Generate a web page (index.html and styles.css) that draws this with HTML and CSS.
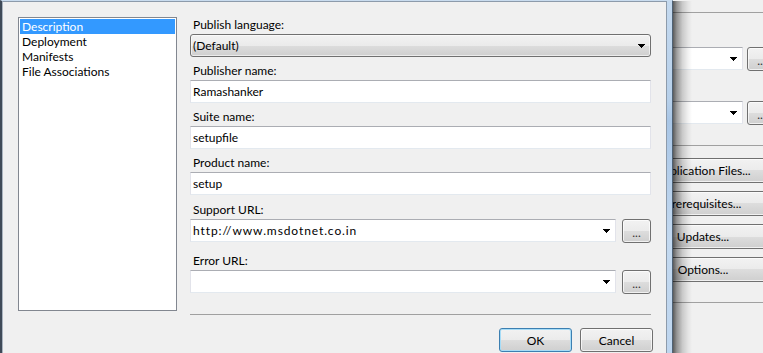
FILE: index.html
```html
<!DOCTYPE html>
<html lang="en">
<head>
  <meta charset="UTF-8" />
  <title>Publish Options</title>
  <meta name="viewport" content="width=device-width, initial-scale=1.0">
  <link rel="stylesheet" href="styles.css">
</head>
<body>

  <!-- Publish page of the project, behind the dialog -->
  <div class="vs-page">
    <div class="vs-rule top"></div>
    <div class="vs-row first">
      <div class="textbox combo vs-combo">
        <svg class="arrow" width="7" height="4" viewBox="0 0 7 4"><path d="M0 0h7v1h-1v1h-1v1h-1v1h-1v-1h-1v-1h-1v-1h-1z"/></svg>
      </div>
      <div class="btn dots vs-dots">...</div>
    </div>
    <div class="vs-row second">
      <div class="textbox combo vs-combo">
        <svg class="arrow" width="7" height="4" viewBox="0 0 7 4"><path d="M0 0h7v1h-1v1h-1v1h-1v1h-1v-1h-1v-1h-1v-1h-1z"/></svg>
      </div>
      <div class="btn dots vs-dots">...</div>
    </div>
    <div class="vs-rule middle"></div>
    <div class="vs-buttons">
      <div class="btn vs-btn">Application Files...</div>
      <div class="btn vs-btn">Prerequisites...</div>
      <div class="btn vs-btn">Updates...</div>
      <div class="btn vs-btn">Options...</div>
    </div>
    <div class="vs-rule bottom"></div>
  </div>

  <!-- Publish Options dialog -->
  <div class="dialog">
    <div class="client">
      <ul class="list">
        <li class="selected">Description</li>
        <li>Deployment</li>
        <li>Manifests</li>
        <li>File Associations</li>
      </ul>

      <form class="form" onsubmit="return false">
        <div class="field">
          <label>Publish language:</label>
          <div class="select">
            <span>(Default)</span>
            <svg class="arrow" width="7" height="4" viewBox="0 0 7 4"><path d="M0 0h7v1h-1v1h-1v1h-1v1h-1v-1h-1v-1h-1v-1h-1z"/></svg>
          </div>
        </div>
        <div class="field">
          <label for="publisher">Publisher name:</label>
          <input class="textbox" type="text" id="publisher" value="Ramashanker">
        </div>
        <div class="field">
          <label for="suite">Suite name:</label>
          <input class="textbox" type="text" id="suite" value="setupfile">
        </div>
        <div class="field">
          <label for="product">Product name:</label>
          <input class="textbox" type="text" id="product" value="setup">
        </div>
        <div class="field support">
          <label>Support URL:</label>
          <div class="url-row">
            <div class="textbox combo">
              <span class="url">http://www.msdotnet.co.in</span>
              <svg class="arrow" width="7" height="4" viewBox="0 0 7 4"><path d="M0 0h7v1h-1v1h-1v1h-1v1h-1v-1h-1v-1h-1v-1h-1z"/></svg>
            </div>
            <div class="btn dots">...</div>
          </div>
        </div>
        <div class="field error">
          <label>Error URL:</label>
          <div class="url-row">
            <div class="textbox combo">
              <span></span>
              <svg class="arrow" width="7" height="4" viewBox="0 0 7 4"><path d="M0 0h7v1h-1v1h-1v1h-1v1h-1v-1h-1v-1h-1v-1h-1z"/></svg>
            </div>
            <div class="btn dots">...</div>
          </div>
        </div>

        <div class="separator"></div>

        <div class="actions">
          <button type="submit" class="btn default">OK</button>
          <button type="button" class="btn">Cancel</button>
        </div>
      </form>
    </div>
  </div>

</body>
</html>
```

FILE: styles.css
```css
body {
  margin: 0;
  width: 763px;
  height: 353px;
  overflow: hidden;
  position: relative;
  background: #f0f0f0;
  font-family: Lato, "Open Sans", sans-serif;
  font-size: 12px;
  color: #000;
}

/* ---------- page behind the dialog ---------- */

.vs-page {
  padding-left: 600px;
  padding-top: 12px;
}

.vs-rule {
  border-top: 1px solid #a0a0a0;
}

.vs-rule.middle {
  margin-top: 21px;
}

.vs-rule.bottom {
  margin-top: 20px;
}

.vs-row {
  display: flex;
  gap: 4px;
  height: 23px;
}

.vs-row.first {
  margin-top: 34px;
}

.vs-row.second {
  margin-top: 31px;
}

.vs-combo {
  flex: none;
  width: 143px;
}

.vs-dots {
  flex: none;
  width: 26px;
  height: 24px;
}

.vs-buttons {
  display: flex;
  flex-direction: column;
  gap: 8px;
  margin-top: 12px;
  margin-left: 36px;
}

.vs-btn {
  width: 134px;
  height: 25px;
}

/* ---------- dialog window ---------- */

.dialog {
  position: absolute;
  left: 0;
  top: 0;
  width: 673px;
  height: 400px;
  box-sizing: border-box;
  display: flex;
  border-left: 2px solid #3f4a58;
  border-top: 1px solid #c9dcef;
  border-right: 1px solid #4f6275;
  padding-right: 5px;
  background: linear-gradient(#c4d9ef, #b7d0ea 25%, #a9c6e6 30%, #c3d9f0 60%, #bcd4ee);
}

/* window shadow falling on the page */
.dialog::after {
  content: "";
  position: absolute;
  top: 0;
  bottom: 0;
  left: calc(100% + 1px);
  width: 19px;
  background: linear-gradient(to right, rgba(0, 0, 0, 0.62), rgba(0, 0, 0, 0.38) 20%, rgba(0, 0, 0, 0.16) 50%, rgba(0, 0, 0, 0.05) 80%, rgba(0, 0, 0, 0));
}

.client {
  flex: 1;
  display: flex;
  align-items: flex-start;
  gap: 13px;
  padding: 15px 15px 0 15px;
  background: #f0f0f0;
  border-left: 1px solid #aab4c0;
  border-top: 1px solid #8d9bab;
  border-right: 1px solid #8d9bab;
}

.list {
  list-style: none;
  margin: 0;
  padding: 1px;
  width: 159px;
  height: 294px;
  box-sizing: border-box;
  background: white;
  border: 1px solid #828790;
}

.list li {
  line-height: 15px;
  padding-left: 2px;
  white-space: nowrap;
}

.list li.selected {
  background: #3399ff;
  color: white;
}

.form {
  width: 461px;
  display: flex;
  flex-direction: column;
}

.field {
  display: flex;
  flex-direction: column;
  gap: 2px;
  margin-bottom: 6px;
}

.field.support {
  margin-top: 1px;
}

.field.error {
  margin-top: 4px;
}

label {
  line-height: 15px;
  padding-left: 3px;
}

/* ---------- win7 controls ---------- */

.textbox {
  height: 23px;
  box-sizing: border-box;
  margin: 0;
  padding: 0 2px;
  background: white;
  border: 1px solid;
  border-color: #abadb3 #e2e3ea #e3e9ef #e2e3ea;
  font: inherit;
  color: #000;
  outline: none;
}

.combo {
  display: flex;
  align-items: center;
  padding-right: 5px;
}

.url {
  letter-spacing: 0.9px;
}

.select {
  height: 23px;
  box-sizing: border-box;
  display: flex;
  align-items: center;
  padding: 0 5px 0 2px;
  border: 1px solid #707070;
  border-radius: 3px;
  background: linear-gradient(#f2f2f2, #ebebeb 50%, #dddddd 50%, #cfcfcf);
  box-shadow: inset 0 0 0 1px rgba(255, 255, 255, 0.6);
}

.arrow {
  flex: none;
  margin-left: auto;
  fill: #000;
}

.url-row {
  display: flex;
  gap: 6px;
  align-items: flex-start;
}

.url-row .combo {
  width: 426px;
}

.btn {
  box-sizing: border-box;
  display: flex;
  align-items: center;
  justify-content: center;
  margin: 0;
  padding: 0;
  font: inherit;
  color: #000;
  border: 1px solid #707070;
  border-radius: 3px;
  background: linear-gradient(#f2f2f2, #ebebeb 50%, #dddddd 50%, #cfcfcf);
  box-shadow: inset 0 0 0 1px rgba(255, 255, 255, 0.7);
  white-space: nowrap;
}

.dots {
  width: 29px;
  height: 24px;
  padding-top: 2px;
  color: #333;
}

.separator {
  margin-top: 14px;
  border-top: 1px solid #a0a0a0;
}

.actions {
  display: flex;
  justify-content: flex-end;
  gap: 8px;
  margin-top: 13px;
  margin-right: -2px;
}

.actions .btn {
  width: 73px;
  height: 24px;
}

.btn.default {
  border-color: #3c7fb1;
  box-shadow: inset 0 0 0 1px #a6dcf7;
}
```
